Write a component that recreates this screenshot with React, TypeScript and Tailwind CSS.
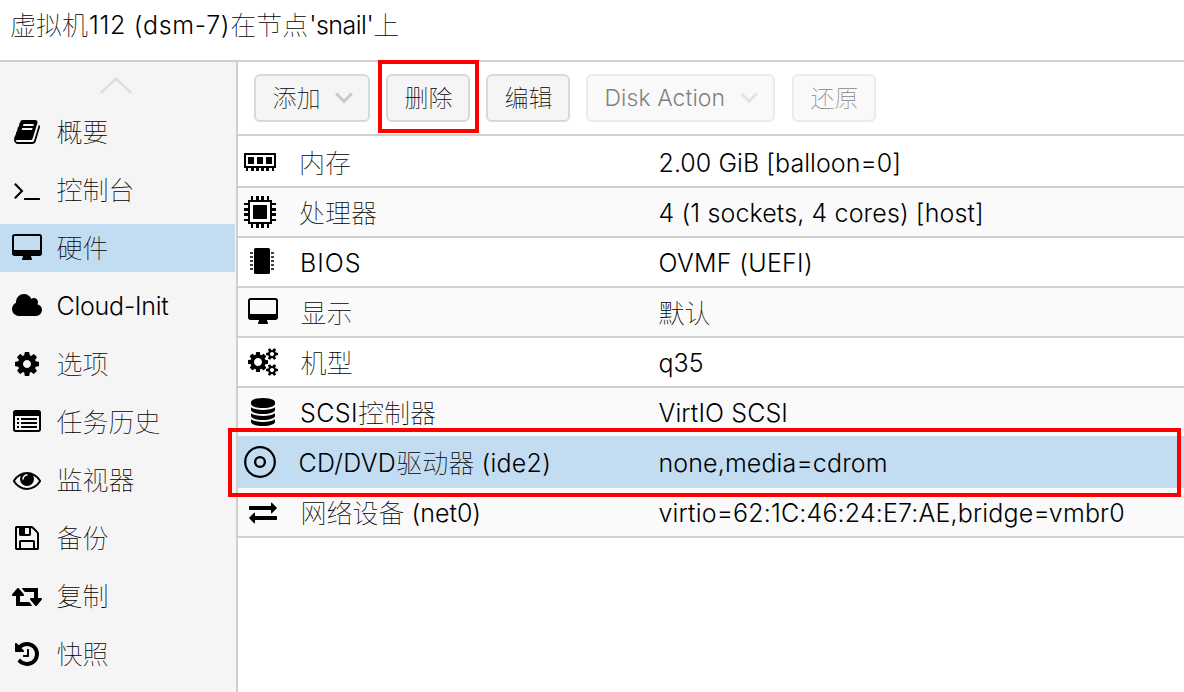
import type { ReactNode } from "react";

type GlyphProps = { d: string; wide?: boolean; x?: number };

function Glyph({ d, wide = false, x = 0 }: GlyphProps) {
  const w = wide ? 1920 : 1792;
  return (
    <svg width={w / 64} height={28} viewBox={`${x} 0 ${w} 1792`} fill="black" className="shrink-0">
      <path d={d} />
    </svg>
  );
}

const smallGear = "v140q0 16-149 31-12 27-30 52 51 113 51 138 0 4-4 7-122 71-124 71-8 0-46-47t-52-68q-20 2-30 2t-30-2q-14 21-52 68t-46 47q-2 0-124-71-4-3-4-7 0-25 51-138-18-25-30-52-149-15-149-31v-140q0-16 149-31 13-29 30-52-51-113-51-138 0-4 4-7 4-2 35-20t59-34 30-16q8 0 46 46.5t52 67.5q20-2 30-2t30 2q51-71 92-112l6-2q4 0 124 70 4 3 4 7 0 25-51 138 17 23 30 52 149 15 149 31z";
const disc = "q237 0 443-43t325-127v170q0 69-103 128t-280 93.5-385 34.5-385-34.5-280-93.5-103-128v-170q119 84 325 127t443 43z";

const paths = {
  book: "M1703 478q40 57 18 129l-275 906q-19 64-76.5 107.5t-122.5 43.5h-923q-77 0-148.5-53.5t-99.5-131.5q-24-67-2-127 0-4 3-27t4-37q1-8-3-21.5t-3-19.5q2-11 8-21t16.5-23.5 16.5-23.5q23-38 45-91.5t30-91.5q3-10 .5-30t-.5-28q3-11 17-28t17-23q21-36 42-92t25-90q1-9-2.5-32t.5-28q4-13 22-30.5t22-22.5q19-26 42.5-84.5t27.5-96.5q1-8-3-25.5t-2-26.5q2-8 9-18t18-23 17-21q8-12 16.5-30.5t15-35 16-36 19.5-32 26.5-23.5 36-11.5 47.5 5.5l-1 3q38-9 51-9h761q74 0 114 56t18 130l-274 906q-36 119-71.5 153.5t-128.5 34.5h-869q-27 0-38 15-11 16-1 43 24 70 144 70h923q29 0 56-15.5t35-41.5l300-987q7-22 5-57 38 15 59 43zm-1064 2q-4 13 2 22.5t20 9.5h608q13 0 25.5-9.5t16.5-22.5l21-64q4-13-2-22.5t-20-9.5h-608q-13 0-25.5 9.5t-16.5 22.5zm-83 256q-4 13 2 22.5t20 9.5h608q13 0 25.5-9.5t16.5-22.5l21-64q4-13-2-22.5t-20-9.5h-608q-13 0-25.5 9.5t-16.5 22.5z",
  terminal: "M649 983l-466 466q-10 10-23 10t-23-10l-50-50q-10-10-10-23t10-23l393-393-393-393q-10-10-10-23t10-23l50-50q10-10 23-10t23 10l466 466q10 10 10 23t-10 23zm1079 457v64q0 14-9 23t-23 9h-960q-14 0-23-9t-9-23v-64q0-14 9-23t23-9h960q14 0 23 9t9 23z",
  desktop: "M1728 992v-832q0-13-9.5-22.5t-22.5-9.5h-1600q-13 0-22.5 9.5t-9.5 22.5v832q0 13 9.5 22.5t22.5 9.5h1600q13 0 22.5-9.5t9.5-22.5zm128-832v1088q0 66-47 113t-113 47h-544q0 37 16 77.5t32 71 16 43.5q0 26-19 45t-45 19h-512q-26 0-45-19t-19-45q0-14 16-44t32-70 16-78h-544q-66 0-113-47t-47-113v-1088q0-66 47-113t113-47h1600q66 0 113 47t47 113z",
  cloud: "M1984 1152q0 159-112.5 271.5t-271.5 112.5h-1088q-185 0-316.5-131.5t-131.5-316.5q0-132 71-241.5t187-163.5q-2-28-2-43 0-212 150-362t362-150q158 0 286.5 88t187.5 230q70-62 166-62 106 0 181 75t75 181q0 75-41 138 129 30 213 134.5t84 239.5z",
  gear: "M1152 896q0-106-75-181t-181-75-181 75-75 181 75 181 181 75 181-75 75-181zm512-109v222q0 12-8 23t-20 13l-185 28q-19 54-39 91 35 50 107 138 10 12 10 25t-9 23q-27 37-99 108t-94 71q-12 0-26-9l-138-108q-44 23-91 38-16 136-29 186-7 28-36 28h-222q-14 0-24.5-8.5t-11.5-21.5l-28-184q-49-16-90-37l-141 107q-10 9-25 9-14 0-25-11-126-114-165-168-7-10-7-23 0-12 8-23 15-21 51-66.5t54-70.5q-27-50-41-99l-183-27q-13-2-21-12.5t-8-23.5v-222q0-12 8-23t19-13l186-28q14-46 39-92-40-57-107-138-10-12-10-24 0-10 9-23 26-36 98.5-107.5t94.5-71.5q13 0 26 10l138 107q44-23 91-38 16-136 29-186 7-28 36-28h222q14 0 24.5 8.5t11.5 21.5l28 184q49 16 90 37l142-107q9-9 24-9 13 0 25 10 129 119 165 170 7 8 7 22 0 12-8 23-15 21-51 66.5t-54 70.5q26 50 41 98l183 28q13 2 21 12.5t8 23.5z",
  list: "M1664 1376v-832q0-13-9.5-22.5t-22.5-9.5h-1472q-13 0-22.5 9.5t-9.5 22.5v832q0 13 9.5 22.5t22.5 9.5h1472q13 0 22.5-9.5t9.5-22.5zm128-1088v1088q0 66-47 113t-113 47h-1472q-66 0-113-47t-47-113v-1088q0-66 47-113t113-47h1472q66 0 113 47t47 113zM256 640h128v128h-128zM256 896h128v128h-128zM256 1152h128v128h-128zM512 640h1024v128h-1024zM512 896h1024v128h-1024zM512 1152h1024v128h-1024z",
  eye: "M1664 960q-152-236-381-353 61 104 61 225 0 185-131.5 316.5t-316.5 131.5-316.5-131.5-131.5-316.5q0-121 61-225-229 117-381 353 133 205 333.5 326.5t434.5 121.5 434.5-121.5 333.5-326.5zm-720-384q0-20-14-34t-34-14q-125 0-214.5 89.5t-89.5 214.5q0 20 14 34t34 14 34-14 14-34q0-86 61-147t147-61q20 0 34-14t14-34zm848 384q0 34-20 69-140 230-376.5 368.5t-499.5 138.5-499.5-139-376.5-368q-20-35-20-69t20-69q140-229 376.5-368t499.5-139 499.5 139 376.5 368q20 35 20 69z",
  floppy: "M512 1536h768v-384h-768v384zm896 0h128v-896q0-14-10-38.5t-20-34.5l-281-281q-10-10-34-20t-39-10v416q0 40-28 68t-68 28h-576q-40 0-68-28t-28-68v-416h-128v1280h128v-416q0-40 28-68t68-28h832q40 0 68 28t28 68v416zm-384-928v-320q0-13-9.5-22.5t-22.5-9.5h-192q-13 0-22.5 9.5t-9.5 22.5v320q0 13 9.5 22.5t22.5 9.5h192q13 0 22.5-9.5t9.5-22.5zm640 32v928q0 40-28 68t-68 28h-1344q-40 0-68-28t-28-68v-1344q0-40 28-68t68-28h928q40 0 88 20t76 48l280 280q28 28 48 76t20 88z",
  retweet: "M1280 1504q0 13-9.5 22.5t-22.5 9.5h-960q-8 0-13.5-2t-9-7-5.5-8-3-11.5-1-11.5v-600h-192q-26 0-45-19t-19-45q0-24 15-41l320-384q19-22 49-22t49 22l320 384q15 17 15 41 0 26-19 45t-45 19h-192v384h576q16 0 25 11l160 192q7 10 7 21zm640-416q0 24-15 41l-320 384q-20 23-49 23t-49-23l-320-384q-15-17-15-41 0-26 19-45t45-19h192v-384h-576q-16 0-25-12l-160-192q-7-9-7-20 0-13 9.5-22.5t22.5-9.5h960q8 0 13.5 2t9 7 5.5 8 3 11.5 1 11.5v600h192q26 0 45 19t19 45z",
  history: "M1664 896q0 156-61 298t-164 245-245 164-298 61q-172 0-327-72.5t-264-204.5q-7-10-6.5-22.5t8.5-20.5l137-138q10-9 25-9 16 2 23 12 73 95 179 147t225 52q104 0 198.5-40.5t163.5-109.5 109.5-163.5 40.5-198.5-40.5-198.5-109.5-163.5-163.5-109.5-198.5-40.5q-98 0-188 35.5t-160 101.5l137 138q31 30 14 69-17 40-59 40h-448q-26 0-45-19t-19-45v-448q0-42 40-59 39-17 69 14l130 129q107-101 244.5-156.5t284.5-55.5q156 0 298 61t245 164 164 245 61 298zm-640-288v448q0 14-9 23t-23 9h-320q-14 0-23-9t-9-23v-64q0-14 9-23t23-9h224v-352q0-14 9-23t23-9h64q14 0 23 9t9 23z",
  gears: "M832 896q0-106-75-181t-181-75-181 75-75 181 75 181 181 75 181-75 75-181zm768 512q0-52-38-90t-90-38-90 38-38 90q0 53 37.5 90.5t90.5 37.5 90.5-37.5 37.5-90.5zm0-1024q0-52-38-90t-90-38-90 38-38 90q0 53 37.5 90.5t90.5 37.5 90.5-37.5 37.5-90.5zm-384 421v185q0 10-7 19.5t-16 10.5l-155 24q-11 35-32 76 34 48 90 115 7 11 7 20 0 12-7 19-23 30-82.5 89.5t-78.5 59.5q-11 0-21-7l-115-90q-37 19-77 31-11 108-23 155-7 24-30 24h-186q-11 0-20-7.5t-10-17.5l-23-153q-34-10-75-31l-118 89q-7 7-20 7-11 0-21-8-144-133-144-160 0-9 7-19 10-14 41-53t47-61q-23-44-35-82l-152-24q-10-1-17-9.5t-7-19.5v-185q0-10 7-19.5t16-10.5l155-24q11-35 32-76-34-48-90-115-7-11-7-20 0-12 7-20 22-30 82-89t79-59q11 0 21 7l115 90q34-18 77-32 11-108 23-154 7-24 30-24h186q11 0 20 7.5t10 17.5l23 153q34 10 75 31l118-89q8-7 20-7 11 0 21 8 144 133 144 160 0 8-7 19-12 16-42 54t-45 60q23 48 34 82l152 23q10 2 17 10.5t7 19.5zm640 533" + smallGear + "m0-1024" + smallGear,
  database: "M896 768" + disc + "m0 768" + disc + "m0-384" + disc + "m0-1152q208 0 385 34.5t280 93.5 103 128v128q0 69-103 128t-280 93.5-385 34.5-385-34.5-280-93.5-103-128v-128q0-69 103-128t280-93.5 385-34.5z",
  exchange: "M1792 1184v192q0 13-9.5 22.5t-22.5 9.5h-1376v192q0 13-9.5 22.5t-22.5 9.5q-12 0-24-10l-319-320q-9-9-9-22 0-14 9-23l320-320q9-9 23-9 13 0 22.5 9.5t9.5 22.5v192h1376q13 0 22.5 9.5t9.5 22.5zm0-544q0 14-9 23l-320 320q-9 9-23 9-13 0-22.5-9.5t-9.5-22.5v-192h-1376q-13 0-22.5-9.5t-9.5-22.5v-192q0-13 9.5-22.5t22.5-9.5h1376v-192q0-14 9-23t23-9q12 0 24 10l319 319q9 9 9 23z",
};

function MemoryIcon() {
  return (
    <svg width="32" height="32" viewBox="0 0 32 32" className="shrink-0">
      <rect x="1" y="8" width="30" height="13" fill="none" stroke="black" strokeWidth="2" />
      <path d="M4 11h6v7H4zM13 11h6v7h-6zM22 11h6v7h-6zM2 22h2v3H2zM7 22h3v3H7zM12 22h3v3h-3zM17 22h3v3h-3zM22 22h3v3h-3zM28 22h2v3h-2z" />
    </svg>
  );
}

function CpuIcon() {
  return (
    <svg width="32" height="32" viewBox="0 0 32 32" className="shrink-0">
      <rect x="5" y="5" width="22" height="22" fill="none" stroke="black" strokeWidth="2" />
      <path d="M9 9h14v14H9zM7 0h2v4H7zM12 0h3v4h-3zM17 0h3v4h-3zM23 0h2v4h-2zM7 28h2v4H7zM12 28h3v4h-3zM17 28h3v4h-3zM23 28h2v4h-2zM0 7h4v2H0zM0 12h4v3H0zM0 17h4v3H0zM0 23h4v2H0zM28 7h4v2h-4zM28 12h4v3h-4zM28 17h4v3h-4zM28 23h4v2h-4z" />
    </svg>
  );
}

function ChipIcon() {
  return (
    <svg width="24" height="28" viewBox="0 0 24 28" className="shrink-0">
      <rect x="4" y="0" width="16" height="26" rx="1.5" />
      <path d="M0 4.2h3v1.6H0zM0 8.2h3v1.6H0zM0 12.2h3v1.6H0zM0 16.2h3v1.6H0zM0 20.2h3v1.6H0zM21 4.2h3v1.6h-3zM21 8.2h3v1.6h-3zM21 12.2h3v1.6h-3zM21 16.2h3v1.6h-3zM21 20.2h3v1.6h-3z" />
    </svg>
  );
}

function DiscIcon() {
  return (
    <svg width="32" height="32" viewBox="0 0 32 32" fill="none" stroke="black" className="shrink-0">
      <circle cx="16" cy="16" r="14.8" strokeWidth="2.2" />
      <circle cx="16" cy="16" r="4.9" strokeWidth="2.4" />
    </svg>
  );
}

function Chevron() {
  return (
    <svg width="18" height="12" viewBox="0 0 18 12" fill="none" stroke="#c9c9c9" strokeWidth="3">
      <path d="M1.2 1.5 9 9.3 16.8 1.5" />
    </svg>
  );
}

/* Latin runs are a little smaller than the Chinese ones; tracking is given per Latin run. */
function Label({ text, latin = "text-[25px]", tracking = [] }: { text: string; latin?: string; tracking?: string[] }) {
  const runs = text.match(/[\u4e00-\u9fff]+|[^\u4e00-\u9fff]+/g) ?? [];
  let n = 0;
  return (
    <span className="whitespace-pre">
      {runs.map((run, i) =>
        /[\u4e00-\u9fff]/.test(run) ? (
          <span key={i} className="align-[-1px] leading-none font-thin">{run}</span>
        ) : (
          <span key={i} className={`${latin} ${tracking[n++] ?? ""}`}>{run}</span>
        ),
      )}
    </span>
  );
}

const menu: { label: string; icon: ReactNode; active?: boolean; tracking?: string[] }[] = [
  { label: "概要", icon: <Glyph d={paths.book} /> },
  { label: "控制台", icon: <Glyph d={paths.terminal} /> },
  { label: "硬件", icon: <Glyph d={paths.desktop} wide x={-64} />, active: true },
  { label: "Cloud-Init", icon: <Glyph d={paths.cloud} wide x={64} />, tracking: ["tracking-[-0.25px]"] },
  { label: "选项", icon: <Glyph d={paths.gear} /> },
  { label: "任务历史", icon: <Glyph d={paths.list} /> },
  { label: "监视器", icon: <Glyph d={paths.eye} /> },
  { label: "备份", icon: <Glyph d={paths.floppy} /> },
  { label: "复制", icon: <Glyph d={paths.retweet} wide /> },
  { label: "快照", icon: <Glyph d={paths.history} /> },
];

type Row = {
  name: string;
  value: string;
  icon: ReactNode;
  iconPad: string;
  namePad: string;
  tone: string;
  nameTracking?: string[];
  valueTracking?: string[];
  marked?: boolean;
};

const rows: Row[] = [
  { name: "内存", value: "2.00 GiB [balloon=0]", icon: <MemoryIcon />, iconPad: "pl-[6px]", namePad: "pl-[1px]", tone: "bg-white border-[#cfcfcf]", valueTracking: ["tracking-[0.05px]"] },
  { name: "处理器", value: "4 (1 sockets, 4 cores) [host]", icon: <CpuIcon />, iconPad: "pl-[6px]", namePad: "pl-[1px]", tone: "bg-[#fafafa] border-[#cfcfcf]", valueTracking: ["tracking-[0.12px]"] },
  { name: "BIOS", value: "OVMF (UEFI)", icon: <ChipIcon />, iconPad: "pl-[12px]", namePad: "pl-[2px]", tone: "bg-white border-[#cfcfcf]", nameTracking: ["tracking-[1px]"], valueTracking: ["tracking-[0.3px]"] },
  { name: "显示", value: "默认", icon: <Glyph d={paths.desktop} wide x={-64} />, iconPad: "pl-[9.5px]", namePad: "pl-[2.5px]", tone: "bg-[#fafafa] border-[#cfcfcf]" },
  { name: "机型", value: "q35", icon: <Glyph d={paths.gears} wide x={-64} />, iconPad: "pl-[9.5px]", namePad: "pl-[2.5px]", tone: "bg-white border-[#cfcfcf]" },
  { name: "SCSI控制器", value: "VirtIO SCSI", icon: <Glyph d={paths.database} />, iconPad: "pl-[10.5px]", namePad: "pl-[2px]", tone: "bg-[#fafafa] border-[#c2dcf1]", nameTracking: ["tracking-[0.4px]"], valueTracking: ["tracking-[0.1px]"] },
  { name: "CD/DVD驱动器 (ide2)", value: "none,media=cdrom", icon: <DiscIcon />, iconPad: "pl-[6px]", namePad: "pl-[0.5px]", tone: "bg-[#c2dcf1] border-[#c2dcf1]", nameTracking: ["tracking-[0.3px]", "tracking-[0.25px]"], valueTracking: ["tracking-[0.12px]"], marked: true },
  { name: "网络设备 (net0)", value: "virtio=62:1C:46:24:E7:AE,bridge=vmbr0", icon: <Glyph d={paths.exchange} />, iconPad: "pl-[10.5px]", namePad: "pl-[2.5px]", tone: "bg-[#fafafa] border-[#cfcfcf]", valueTracking: ["tracking-[0.15px]"] },
];

function ToolButton({ text, width, arrow = false, disabled = false, children }: { text: string; width: string; arrow?: boolean; disabled?: boolean; children?: ReactNode }) {
  return (
    <div className="relative shrink-0">
      <button
        disabled={disabled}
        className={`flex h-12 items-center rounded-[6px] border-2 border-[#d8d8d8] bg-[#f5f5f5] pl-[16.5px] text-[24px] text-black disabled:opacity-50 ${arrow ? "justify-between pr-[15px]" : ""} ${width}`}
      >
        <Label text={text} latin="text-[23px] tracking-[0.05px]" />
        {arrow && <Chevron />}
      </button>
      {children}
    </div>
  );
}

export default function App() {
  return (
    <div className="flex h-[692px] w-[1184px] flex-col overflow-hidden bg-white font-['Inter','Noto_Sans_CJK_SC',sans-serif] text-[26px] leading-[48px] font-light text-black">
      <header className="h-[62px] shrink-0 border-b-2 border-[#cfcfcf] pt-px pl-[10px]">
        <Label
          text="虚拟机112 (dsm-7)在节点'snail'上"
          latin="text-[25px] pl-px"
          tracking={["tracking-[0.65px]", "tracking-[-0.5px]"]}
        />
      </header>
      <div className="flex min-h-0 flex-1">
        <nav className="w-[238px] shrink-0 border-r-2 border-[#cfcfcf] bg-[#f5f5f5]">
          <div className="flex h-[46px] justify-center pt-[15px] pr-[5px]">
            <svg width="32" height="17" viewBox="0 0 32 17" fill="none" stroke="#dedede" strokeWidth="2.6">
              <path d="M1 16 16 1.5 31 16" />
            </svg>
          </div>
          <div className="flex flex-col gap-[10px]">
            {menu.map((item) => (
              <div key={item.label} className={`flex h-12 w-[235px] items-center pl-2 ${item.active ? "bg-[#c2dcf1]" : ""}`}>
                <span className="flex w-[37px] justify-center">{item.icon}</span>
                <span className="pl-[11.5px]"><Label text={item.label} tracking={item.tracking} /></span>
              </div>
            ))}
          </div>
        </nav>
        <main className="min-w-0 flex-1">
          <div className="flex h-[74px] gap-4 border-b-2 border-[#cfcfcf] pt-3 pl-4">
            <ToolButton text="添加" width="w-[116px]" arrow />
            <ToolButton text="删除" width="w-[84px]">
              <div className="pointer-events-none absolute -top-[14px] -left-[8px] h-[73px] w-[101px] border-4 border-[#fe0000]" />
            </ToolButton>
            <ToolButton text="编辑" width="w-[84px]" />
            <ToolButton text="Disk Action" width="w-[189px]" arrow disabled />
            <div className="pl-px">
              <ToolButton text="还原" width="w-[84px]" disabled />
            </div>
          </div>
          <div className="pt-[2px]">
            {rows.map((row) => (
              <div key={row.name} className={`relative flex h-[50px] items-center border-b-2 ${row.tone}`}>
                <div className={`flex w-[60px] shrink-0 ${row.iconPad}`}>{row.icon}</div>
                <div className={`w-[360.5px] shrink-0 pt-[2px] ${row.namePad}`}>
                  <Label text={row.name} tracking={row.nameTracking} />
                </div>
                <div className="pt-[2px]">
                  <Label text={row.value} tracking={row.valueTracking} />
                </div>
                {row.marked && (
                  <div className="pointer-events-none absolute -top-[10px] -left-[10px] z-10 h-[69px] w-[953px] border-4 border-[#fe0000]" />
                )}
              </div>
            ))}
          </div>
        </main>
      </div>
    </div>
  );
}
